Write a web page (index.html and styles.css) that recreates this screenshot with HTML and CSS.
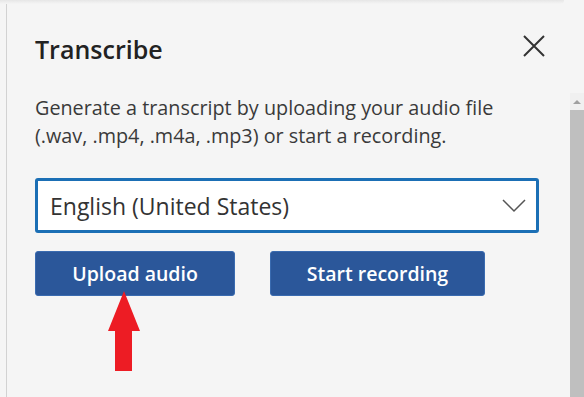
FILE: index.html
```html
<!DOCTYPE html>
<html lang="en">
    <head>
        <meta charset="UTF-8">
        <title>Transcribe</title>
        <link rel="stylesheet" href="styles.css">
    </head>
    <body>
        <div class="topbar"></div>
        <div class="pane">
            <div class="panel">
                <div class="head">
                    <h1 class="title">Transcribe</h1>
                    <svg class="close" width="22" height="22" viewBox="0 0 22 22">
                        <path d="M1 1 L21 21 M21 1 L1 21" stroke="#333" stroke-width="2" fill="none"/>
                    </svg>
                </div>
                <p class="desc">Generate a transcript by uploading your audio file<br>(.wav, .mp4, .m4a, .mp3) or start a recording.</p>
                <div class="select">
                    <span>English (United States)</span>
                    <svg width="24" height="14" viewBox="0 0 24 14">
                        <path d="M1 1 L12 12 L23 1" stroke="#555" stroke-width="1.5" fill="none"/>
                    </svg>
                </div>
                <div class="btns">
                    <button class="btn upload">Upload audio</button>
                    <button class="btn record">Start recording</button>
                    <!-- annotation -->
                    <svg class="arrow" width="34" height="80" viewBox="0 0 34 80">
                        <polygon points="17,0 33,40 25,40 25,80 8,80 8,40 1,40" fill="#ed1c24"/>
                    </svg>
                </div>
            </div>
            <div class="scroll">
                <div class="up"></div>
                <div class="thumb"></div>
            </div>
        </div>
    </body>
</html>
```

FILE: styles.css
```css
html, body {
    margin: 0;
    height: 100%;
}
body {
    font-family: "Open Sans", "Noto Sans", "Liberation Sans", sans-serif;
    background-color: #f5f5f5;
    color: #333;
    overflow: hidden;
}
.topbar {
    height: 4px;
    margin-right: 20px;
    background: linear-gradient(#e6e6e6, #f5f5f5);
    border-radius: 0 0 12px 0;
}
.pane {
    display: flex;
    height: 393px;
    margin-left: 6px;
    border-left: 1px solid #d2d2d2;
}
.panel {
    flex: 1;
    padding: 0 31px 0 28px;
    position: relative;
}
.head {
    display: flex;
    justify-content: space-between;
    align-items: flex-start;
    margin-top: 28px;
    height: 34px;
}
.title {
    margin: 0;
    font-size: 25px;
    line-height: 34px;
    font-weight: 600;
    color: #222;
}
.close {
    margin-top: 3px;
    margin-right: -6px;
}
.desc {
    margin: 28px 0 0 0;
    font-size: 19.8px;
    line-height: 28px;
    color: #3a3a3a;
    white-space: nowrap;
}
.select {
    margin-top: 28px;
    height: 49px;
    border: 3px solid #1b6fb5;
    border-radius: 3px;
    background: #fff;
    display: flex;
    align-items: center;
    justify-content: space-between;
    padding: 0 10px 0 12px;
    font-size: 23px;
    color: #333;
}
.btns {
    display: flex;
    gap: 35px;
    margin-top: 18px;
    position: relative;
}
.btn {
    height: 45px;
    background-color: #2b579a;
    border: 1px solid #3a6bb0;
    border-radius: 3px;
    color: #fff;
    font-family: inherit;
    font-size: 19.5px;
    font-weight: 600;
}
.upload {
    width: 200px;
}
.record {
    width: 215px;
}
.arrow {
    position: absolute;
    left: 72px;
    top: 40px;
}
.scroll {
    width: 14px;
    margin-top: 89px;
    background: #f0f0f0;
    display: flex;
    flex-direction: column;
    align-items: center;
}
.up {
    margin-top: 7px;
    width: 0;
    height: 0;
    border-left: 4px solid transparent;
    border-right: 4px solid transparent;
    border-bottom: 4px solid #a0a0a0;
}
.thumb {
    margin-top: 6px;
    width: 14px;
    flex: 1;
    background: #bfbfbf;
}
```
